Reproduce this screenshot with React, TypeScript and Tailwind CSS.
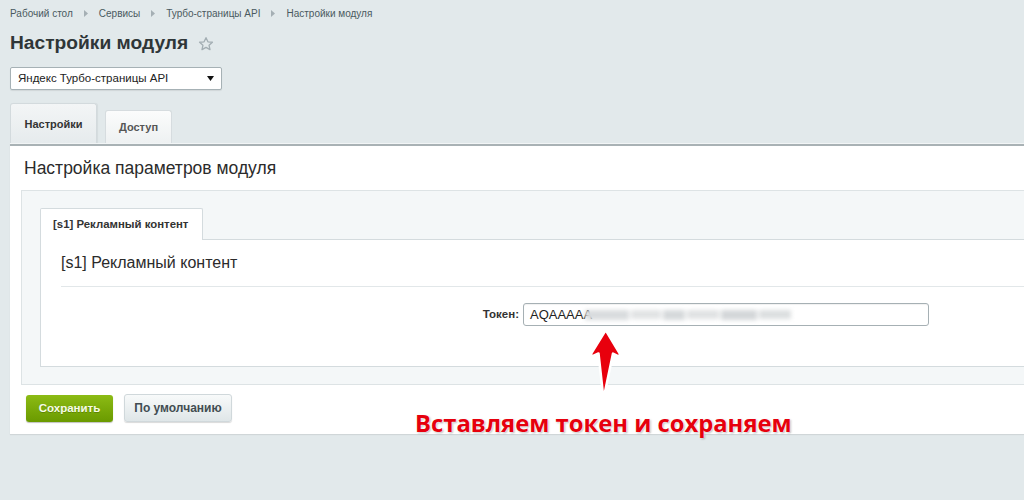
import React from "react";

function Crumb({ children, last }: { children: React.ReactNode; last?: boolean }) {
  return (
    <>
      <span>{children}</span>
      {!last && (
        <svg width="4" height="7" viewBox="0 0 4 7" className="mx-[11px]">
          <path d="M0 0 L4 3.5 L0 7 Z" fill="#a5afb4" />
        </svg>
      )}
    </>
  );
}

export default function App() {
  return (
    <div
      className="relative w-[1024px] h-[500px] overflow-hidden bg-[#e2e9eb] text-[#333]"
      style={{ fontFamily: '"Liberation Sans", Arial, sans-serif' }}
    >
      {/* breadcrumb */}
      <div className="h-[22px] pt-[5px] pl-[10px] flex items-center text-[10px] leading-[13px] text-[#4a5960]">
        <Crumb>Рабочий стол</Crumb>
        <Crumb>Сервисы</Crumb>
        <Crumb>Турбо-страницы API</Crumb>
        <Crumb last>Настройки модуля</Crumb>
      </div>

      {/* title */}
      <div className="mt-[9px] pl-[10px] h-[24px] flex items-center">
        <h1 className="text-[19.2px] leading-[24px] font-bold text-[#2f3638]">Настройки модуля</h1>
        <svg width="16" height="16" viewBox="0 0 24 24" className="ml-[10px] mt-[2px]">
          <path
            d="M12 2.5 L14.9 8.7 L21.6 9.4 L16.6 13.9 L18 20.5 L12 17.1 L6 20.5 L7.4 13.9 L2.4 9.4 L9.1 8.7 Z"
            fill="none"
            stroke="#a3aeb3"
            strokeWidth="2"
            strokeLinejoin="round"
          />
        </svg>
      </div>

      {/* select */}
      <div className="mt-[12px] ml-[10px] w-[212px] h-[23px] bg-white border border-[#a6b1b5] rounded-[2px] flex items-center justify-between pl-[7px] pr-[7px] text-[11.5px] text-[#222] shadow-[0_1px_1px_rgba(0,0,0,0.08)]">
        <span>Яндекс Турбо-страницы API</span>
        <svg width="7" height="5" viewBox="0 0 7 5">
          <path d="M0 0 H7 L3.5 5 Z" fill="#111" />
        </svg>
      </div>

      {/* tabs */}
      <div className="mt-[13px] ml-[10px] flex items-end h-[40px]">
        <div className="w-[87px] h-[40px] bg-gradient-to-b from-[#f3f5f6] to-[#e6ebed] border border-[#d3dadd] border-b-0 rounded-t-[3px] flex items-start justify-center pt-[12px] text-[11px] font-bold text-[#333] shadow-[1px_0_1px_rgba(0,0,0,0.06)]">
          Настройки
        </div>
        <div className="ml-[8px] w-[67px] h-[33px] bg-gradient-to-b from-[#fbfcfc] to-[#eef1f2] border border-[#d6dcdf] border-b-0 rounded-t-[3px] flex items-start justify-center pt-[8px] text-[11px] font-bold text-[#555]">
          Доступ
        </div>
      </div>

      {/* panel */}
      <div className="ml-[10px] w-[1030px] bg-white border-t border-t-[#f2f5f6] shadow-[0_1px_1px_rgba(0,0,0,0.08)]">
        <div className="h-[2px] bg-[#a9b2b5]" />
        <div className="h-[44px] pl-[14px] flex items-center text-[17.5px] text-[#2b2b2b]">
          Настройка параметров модуля
        </div>

        {/* gray area */}
        <div className="ml-[11px] bg-[#f4f7f8] border-t border-l border-b border-[#dde3e5] pt-[17px] pb-[17px] pl-[18px]">
          {/* inner tab */}
          <div className="w-[163px] h-[32px] bg-white border border-[#d4dbde] border-b-0 rounded-t-[2px] flex items-center pl-[12px] text-[11.4px] font-bold text-[#333] relative z-10 -mb-px">
            [s1] Рекламный контент
          </div>
          <div className="bg-white border border-[#d4dbde] h-[128px]">
            <div className="ml-[20px] h-[47px] border-b border-[#e2e7e9] flex items-center text-[16px] text-[#2b2b2b]">
              [s1] Рекламный контент
            </div>
            <div className="mt-[16px] flex items-center">
              <div className="w-[482px] pr-[4px] text-right text-[11.5px] font-bold text-[#333]">Токен:</div>
              <div className="w-[406px] h-[23px] border border-[#a6b0b4] rounded-[3px] bg-white flex items-center pl-[6px] text-[13px] text-[#222] shadow-[inset_0_1px_1px_rgba(0,0,0,0.06)]">
                <span>AQAAAAA</span>
                <span className="ml-[-7px] flex items-center gap-[2px] blur-[2px]">
                  <span className="block w-[44px] h-[10px] bg-[#d9dcde]" />
                  <span className="block w-[30px] h-[9px] bg-[#e1e3e4]" />
                  <span className="block w-[22px] h-[10px] bg-[#d6d9db]" />
                  <span className="block w-[32px] h-[9px] bg-[#e0e2e3]" />
                  <span className="block w-[36px] h-[10px] bg-[#d4d7d9]" />
                  <span className="block w-[32px] h-[9px] bg-[#dcdfe0]" />
                </span>
              </div>
            </div>
          </div>
        </div>

        {/* footer */}
        <div className="h-[49px] pl-[16px] pt-[10px] flex items-start gap-[11px]">
          <button className="w-[87px] h-[27px] rounded-[3px] bg-gradient-to-b from-[#8cbb14] to-[#6a9a00] text-[11.5px] font-bold text-[#f6fbe8] shadow-[0_1px_1px_rgba(0,0,0,0.25)] [text-shadow:0_1px_0_rgba(0,0,0,0.2)]">
            Сохранить
          </button>
          <button className="-mt-px w-[108px] h-[28px] rounded-[3px] bg-gradient-to-b from-[#f8fafa] to-[#dfe6e8] border border-[#d0d8db] text-[12px] font-bold text-[#424d52] shadow-[0_1px_1px_rgba(0,0,0,0.15)]">
            По умолчанию
          </button>
        </div>
      </div>

      {/* annotation arrow */}
      <svg
        width="44"
        height="84"
        viewBox="0 0 44 84"
        className="absolute left-[583px] top-[322px]"
      >
        <path
          d="M22.7 8 L36.5 31 Q37.5 34 35 34 L30 31.5 L20.5 77 L15.5 31.5 L10 34 Q7.5 34 8.5 31 Z"
          fill="#e8000d"
          stroke="#ffffff"
          strokeWidth="2.5"
          strokeLinejoin="round"
        />
      </svg>

      {/* annotation text */}
      <div
        className="absolute left-[415px] top-[407px] text-[23.8px] leading-[32px] font-bold text-[#e6000d] [text-shadow:0_0_2px_#fff,0_0_2px_#fff,1px_1px_2px_rgba(0,0,0,0.35)]"
        style={{ fontFamily: '"Open Sans", "Liberation Sans", sans-serif' }}
      >
        Вставляем токен и сохраняем
      </div>
    </div>
  );
}
